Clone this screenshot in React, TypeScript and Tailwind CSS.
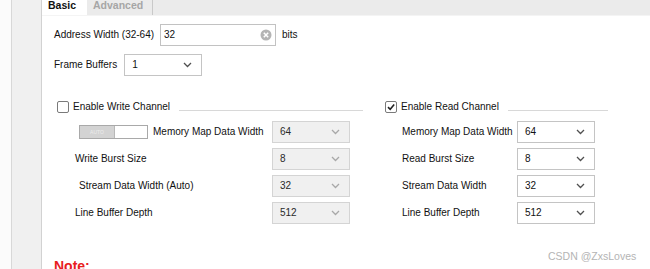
import type { ReactNode } from 'react';

function Chevron({ muted }: { muted?: boolean }) {
  return (
    <svg width="9" height="6" viewBox="0 0 9 6" className="shrink-0">
      <path d="M1 1 L4.5 4.5 L8 1" fill="none" stroke={muted ? '#a8a8a8' : '#505050'} strokeWidth="1.3" />
    </svg>
  );
}

function Select({ value, disabled, width = 'w-[78px]' }: { value: string; disabled?: boolean; width?: string }) {
  return (
    <div
      className={`${width} h-[22px] flex items-center justify-between pl-[7px] pr-[9px] border ${
        disabled ? 'bg-[#f0f0f0] border-[#d4d4d4] text-[#2a2a2a]' : 'bg-white border-[#c4c4c4] text-[#111]'
      }`}
    >
      <span>{value}</span>
      <Chevron muted={disabled} />
    </div>
  );
}

function Checkbox({ checked }: { checked?: boolean }) {
  return (
    <div className="w-[12px] h-[12px] rounded-[2px] border border-[#7a7a7a] bg-white flex items-center justify-center shrink-0">
      {checked && (
        <svg width="10" height="10" viewBox="0 0 10 10">
          <path d="M2 5.2 L4.2 7.3 L8.2 2.6" fill="none" stroke="#222" strokeWidth="1.6" />
        </svg>
      )}
    </div>
  );
}

function Row({ children }: { children: ReactNode }) {
  return <div className="h-[27px] flex items-center">{children}</div>;
}

function ChannelHeader({ label, checked }: { label: string; checked?: boolean }) {
  return (
    <div className="h-[12px] flex items-center">
      <Checkbox checked={checked} />
      <span className="ml-[4px] text-[#111]">{label}</span>
      <div className="flex-1 ml-[9px] mt-[6px] h-px bg-[#d8d8d8]" />
    </div>
  );
}

const readRows = [
  ['Memory Map Data Width', '64'],
  ['Read Burst Size', '8'],
  ['Stream Data Width', '32'],
  ['Line Buffer Depth', '512'],
];

export default function App() {
  return (
    <div
      className="relative w-[650px] h-[269px] overflow-hidden bg-white flex text-[10px] leading-[12px] text-[#111]"
      style={{ fontFamily: '"Liberation Sans", Arial, sans-serif' }}
    >
      {/* side gutter */}
      <div className="w-[12px] bg-[#fbfbfb] border-r border-[#d8d8d8]" />
      <div className="w-[30px] bg-[#f0f0f0] border-r border-[#d2d2d2]" />

      <div className="flex-1 flex flex-col">
        {/* tabs */}
        <div className="h-[18px] bg-[#ebebeb] flex border-b border-[#f4f4f4]">
          <div className="w-[45px] bg-white pl-[6px] font-bold text-[10.5px] leading-[10px] text-[#111]">Basic</div>
          <div className="w-[66px] pl-[6px] font-bold text-[10.5px] leading-[10px] text-[#a6a6a6] border-r border-[#c9c9c9] h-[15px]">
            Advanced
          </div>
        </div>

        <div className="pl-[12px] pt-[8px] flex flex-col">
          <div className="flex items-center h-[22px]">
            <span>Address Width (32-64)</span>
            <div className="ml-[6px] w-[116px] h-[22px] border border-[#c2c2c2] flex items-center justify-between pl-[3px] pr-[3px]">
              <span>32</span>
              <svg width="12" height="12" viewBox="0 0 12 12">
                <circle cx="6" cy="6" r="5.5" fill="#b4b4b4" />
                <path d="M3.8 3.8 L8.2 8.2 M8.2 3.8 L3.8 8.2" stroke="#fff" strokeWidth="1.5" />
              </svg>
            </div>
            <span className="ml-[6px]">bits</span>
          </div>

          <div className="flex items-center mt-[8px] h-[22px]">
            <span>Frame Buffers</span>
            <div className="ml-[7px]">
              <Select value="1" />
            </div>
          </div>

          <div className="flex mt-[25px] pl-[3px]">
            {/* write channel */}
            <div className="w-[306px] flex flex-col">
              <ChannelHeader label="Enable Write Channel" />
              <div className="mt-[5px] flex flex-col pl-[18px]">
                <Row>
                  <div className="ml-[4px] w-[69px] h-[14px] flex border border-[#a9a9a9]">
                    <div className="w-[34px] bg-[#d3d3d3] flex items-center justify-center text-[5px] leading-[6px] text-[#ececec]">
                      AUTO
                    </div>
                    <div className="flex-1 bg-white border-l border-[#b8b8b8]" />
                  </div>
                  <span className="ml-[5px] w-[119px]">Memory Map Data Width</span>
                  <Select value="64" disabled />
                </Row>
                <Row>
                  <span className="w-[197px]">Write Burst Size</span>
                  <Select value="8" disabled />
                </Row>
                <Row>
                  <span className="ml-[4px] w-[193px]">Stream Data Width (Auto)</span>
                  <Select value="32" disabled />
                </Row>
                <Row>
                  <span className="w-[197px]">Line Buffer Depth</span>
                  <Select value="512" disabled />
                </Row>
              </div>
            </div>

            {/* read channel */}
            <div className="ml-[22px] w-[223px] flex flex-col">
              <ChannelHeader label="Enable Read Channel" checked />
              <div className="mt-[5px] flex flex-col pl-[17px]">
                {readRows.map(([label, value]) => (
                  <Row key={label}>
                    <span className="w-[115px]">{label}</span>
                    <Select value={value} />
                  </Row>
                ))}
              </div>
            </div>
          </div>

          <div className="mt-[32px] font-bold text-[14px] leading-[16px] text-[#e8201e]">Note:</div>
        </div>
      </div>

      <div className="absolute left-[548px] top-[250px] text-[10.5px] leading-[12px] text-[#b4b4b4]">CSDN @ZxsLoves</div>
    </div>
  );
}
